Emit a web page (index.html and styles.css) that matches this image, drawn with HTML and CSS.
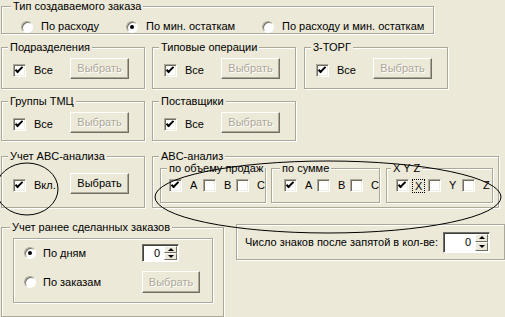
FILE: index.html
```html
<!DOCTYPE html>
<html lang="ru">
<head>
    <meta charset="UTF-8">
    <title>Параметры заказа</title>
    <link rel="stylesheet" href="styles.css">
</head>
<body>
<div class="page">
    <div class="group g-type">
        <div class="title t-type">Тип создаваемого заказа</div>
        <div class="radios">
            <label class="opt w1"><span class="radio"></span>По расходу</label>
            <label class="opt w2"><span class="radio on"></span>По мин. остаткам</label>
            <label class="opt"><span class="radio"></span>По расходу и мин. остаткам</label>
        </div>
    </div>

    <div class="row r2">
        <div class="group g-small">
            <div class="title">Подразделения</div>
            <div class="line">
                <label class="check"><span class="cb on"></span>Все</label>
                <button class="btn" disabled>Выбрать</button>
            </div>
        </div>
        <div class="group g-small">
            <div class="title">Типовые операции</div>
            <div class="line">
                <label class="check"><span class="cb on"></span>Все</label>
                <button class="btn" disabled>Выбрать</button>
            </div>
        </div>
        <div class="group g-small g-last">
            <div class="title">3-ТОРГ</div>
            <div class="line">
                <label class="check"><span class="cb on"></span>Все</label>
                <button class="btn" disabled>Выбрать</button>
            </div>
        </div>
    </div>

    <div class="row r3">
        <div class="group g-small short">
            <div class="title">Группы ТМЦ</div>
            <div class="line">
                <label class="check"><span class="cb on"></span>Все</label>
                <button class="btn" disabled>Выбрать</button>
            </div>
        </div>
        <div class="group g-small short">
            <div class="title">Поставщики</div>
            <div class="line">
                <label class="check"><span class="cb on"></span>Все</label>
                <button class="btn" disabled>Выбрать</button>
            </div>
        </div>
    </div>

    <div class="row r4">
        <div class="group g-small tall">
            <div class="title">Учет ABC-анализа</div>
            <div class="line line-tall">
                <label class="check"><span class="cb on"></span>Вкл.</label>
                <button class="btn">Выбрать</button>
            </div>
        </div>
        <div class="group g-abc">
            <div class="title">ABC-анализ</div>
            <div class="subs">
                <div class="group sub sub1">
                    <div class="title t-sub">по объему продаж</div>
                    <div class="sub-line">
                        <label class="abc-item w34"><span class="cb on"></span>A</label>
                        <label class="abc-item w33"><span class="cb"></span>B</label>
                        <label class="abc-item"><span class="cb"></span>C</label>
                    </div>
                </div>
                <div class="group sub sub2">
                    <div class="title t-sum">по сумме</div>
                    <div class="sub-line">
                        <label class="abc-item w33"><span class="cb on"></span>A</label>
                        <label class="abc-item w33"><span class="cb"></span>B</label>
                        <label class="abc-item"><span class="cb"></span>C</label>
                    </div>
                </div>
                <div class="group sub sub3">
                    <div class="title t-xyz">X Y Z</div>
                    <div class="sub-line">
                        <label class="abc-item w32 x"><span class="cb on"></span><span class="focus">X</span></label>
                        <label class="abc-item w34"><span class="cb"></span>Y</label>
                        <label class="abc-item"><span class="cb"></span>Z</label>
                    </div>
                </div>
            </div>
        </div>
    </div>

    <div class="row r5">
        <div class="group g-prev">
            <div class="title t-prev">Учет ранее сделанных заказов</div>
            <div class="group inner">
                <div class="prev-row first">
                    <label class="opt w3"><span class="radio on"></span>По дням</label>
                    <div class="spin">
                        <span class="spin-val">0</span>
                        <span class="spin-btns"><span class="spin-up"></span><span class="spin-down"></span></span>
                    </div>
                </div>
                <div class="prev-row second">
                    <label class="opt w3"><span class="radio"></span>По заказам</label>
                    <button class="btn btn-narrow" disabled>Выбрать</button>
                </div>
            </div>
        </div>
        <div class="group box-num">
            <span class="num-label">Число знаков после запятой в кол-ве:</span>
            <div class="spin big">
                <span class="spin-val">0</span>
                <span class="spin-btns"><span class="spin-up"></span><span class="spin-down"></span></span>
            </div>
        </div>
    </div>

    <!-- hand-drawn marks over the form -->
    <svg class="marks" width="505" height="317" viewBox="0 0 505 317">
        <ellipse cx="27" cy="189" rx="31" ry="26"/>
        <ellipse cx="328" cy="197" rx="173" ry="36"/>
    </svg>
</div>
</body>
</html>
```

FILE: styles.css
```css
body {
    margin: 0;
    background-color: #ece9d8;
    font-family: "Liberation Sans", Arial, sans-serif;
    font-size: 11px;
    line-height: 13px;
    color: #000;
    overflow: hidden;
}

.page {
    position: relative;
    display: flex;
    flex-direction: column;
    align-items: flex-start;
    width: 505px;
    height: 317px;
    padding-left: 1px;
    box-sizing: border-box;
    overflow: hidden;
}

/* etched group frame */
.group {
    box-sizing: border-box;
    border: 1px solid #aca899;
    box-shadow: inset 1px 1px 0 #fff, 1px 1px 0 #fff;
}

.title {
    width: max-content;
    height: 13px;
    margin: -7px 0 0 6px;
    padding: 0 2px;
    background-color: #ece9d8;
    white-space: nowrap;
}

.t-type { margin-left: 9px; }
.t-prev { margin-left: 8px; }
.t-sub { margin-left: 6px; }
.t-sum { margin-left: 8px; }
.t-xyz { margin-left: 4px; }

.row {
    display: flex;
    gap: 7px;
}

/* controls */
.radio {
    position: relative;
    flex: none;
    width: 12px;
    height: 12px;
    box-sizing: border-box;
    border: 1px solid;
    border-color: #aca899 #fff #fff #aca899;
    border-radius: 50%;
    background-color: #fff;
    box-shadow: inset 1px 1px 0 #716f64;
}

.radio.on::after {
    content: "";
    position: absolute;
    left: 3px;
    top: 3px;
    width: 4px;
    height: 4px;
    border-radius: 50%;
    background-color: #000;
}

.cb {
    position: relative;
    flex: none;
    width: 13px;
    height: 13px;
    box-sizing: border-box;
    border: 1px solid;
    border-color: #aca899 #fff #fff #aca899;
    background-color: #fff;
    box-shadow: inset 1px 1px 0 #716f64, inset -1px -1px 0 #f1efe2;
}

.cb.on::after {
    content: "";
    position: absolute;
    left: 3px;
    top: 0;
    width: 2px;
    height: 6px;
    border: solid #000;
    border-width: 0 2px 2px 0;
    transform: rotate(45deg);
}

.btn {
    box-sizing: border-box;
    width: 59px;
    height: 21px;
    padding: 0;
    font: inherit;
    color: #000;
    background-color: #ece9d8;
    border: 1px solid;
    border-color: #fff #716f64 #716f64 #fff;
    box-shadow: inset -1px -1px 0 #aca899;
}

.btn:disabled {
    color: #aca899;
    text-shadow: 1px 1px 0 #fff;
}

.btn-narrow {
    width: 58px;
    height: 22px;
}

.opt {
    display: flex;
    align-items: center;
    gap: 8px;
    height: 13px;
    white-space: nowrap;
}

.check {
    display: flex;
    align-items: center;
    gap: 8px;
    width: 57px;
    height: 13px;
    margin-top: 6px;
}

/* row 1 */
.g-type {
    width: 433px;
    height: 37px;
    margin-top: 6px;
}

.radios {
    display: flex;
    padding: 7px 0 0 19px;
}

.w1 { width: 105px; }
.w2 { width: 136px; }

/* rows 2 and 3 */
.r2 { margin-top: 13px; }
.r3 { margin-top: 12px; }
.r4 { margin-top: 15px; }

.g-small {
    width: 144px;
    height: 42px;
}

.g-small.short { height: 40px; }
.g-small.tall { height: 52px; }
.g-last { margin-left: 1px; }

.line {
    display: flex;
    align-items: flex-start;
    padding: 4px 0 0 11px;
}

.line-tall { padding-top: 10px; }

/* ABC */
.g-abc {
    width: 347px;
    height: 52px;
}

.subs {
    display: flex;
    margin-top: 5px;
    padding-left: 7px;
}

.sub { height: 35px; }
.sub1 { width: 106px; }
.sub2 { width: 109px; margin-left: 5px; }
.sub3 { width: 107px; margin-left: 6px; }

.sub-line {
    display: flex;
    padding-top: 4px;
}

.sub1 .sub-line { padding-left: 8px; }
.sub2 .sub-line { padding-left: 12px; }
.sub3 .sub-line { padding-left: 9px; }

.abc-item {
    display: flex;
    align-items: center;
    gap: 8px;
    height: 13px;
}

.abc-item.x { gap: 3px; }
.w32 { width: 32px; }
.w33 { width: 33px; }
.w34 { width: 34px; }

.focus {
    padding: 0 2px;
    line-height: 12px;
    border: 1px dotted #000;
}

/* row 5 */
.r5 {
    align-items: flex-start;
    gap: 0;
}

.g-prev {
    width: 223px;
    height: 90px;
    margin-top: 19px;
}

.inner {
    width: 200px;
    height: 65px;
    margin: 4px 0 0 11px;
}

.prev-row {
    display: flex;
    align-items: center;
    padding-left: 10px;
}

.prev-row.first { margin-top: 5px; height: 18px; }
.prev-row.second { margin-top: 9px; height: 22px; }

.w3 {
    width: 118px;
    gap: 7px;
}

.box-num {
    display: flex;
    align-items: center;
    width: 269px;
    height: 36px;
    margin: 16px 0 0 12px;
    padding-left: 8px;
}

.num-label { white-space: nowrap; }

/* spin edit */
.spin {
    display: flex;
    box-sizing: border-box;
    width: 37px;
    height: 18px;
    padding: 1px;
    background-color: #fff;
    border: 1px solid;
    border-color: #716f64 #fff #fff #716f64;
    box-shadow: inset 1px 1px 0 #404040;
}

.spin.big {
    width: 47px;
    height: 21px;
    margin-left: auto;
    margin-right: 14px;
}

.spin-val {
    flex: 1;
    padding-right: 4px;
    text-align: right;
    align-self: center;
}

.spin-btns {
    display: flex;
    flex-direction: column;
    width: 13px;
}

.spin-up,
.spin-down {
    display: flex;
    flex: 1;
    align-items: center;
    justify-content: center;
    box-sizing: border-box;
    background-color: #ece9d8;
    border: 1px solid;
    border-color: #fff #716f64 #716f64 #fff;
}

.spin-up::after,
.spin-down::after {
    content: "";
    border-left: 3px solid transparent;
    border-right: 3px solid transparent;
}

.spin-up::after { border-bottom: 3px solid #000; }
.spin-down::after { border-top: 3px solid #000; }

/* pen marks drawn over the dialog */
.marks {
    position: absolute;
    left: 0;
    top: 0;
    pointer-events: none;
}

.marks ellipse {
    fill: none;
    stroke: #000;
    stroke-width: 1;
}
```
